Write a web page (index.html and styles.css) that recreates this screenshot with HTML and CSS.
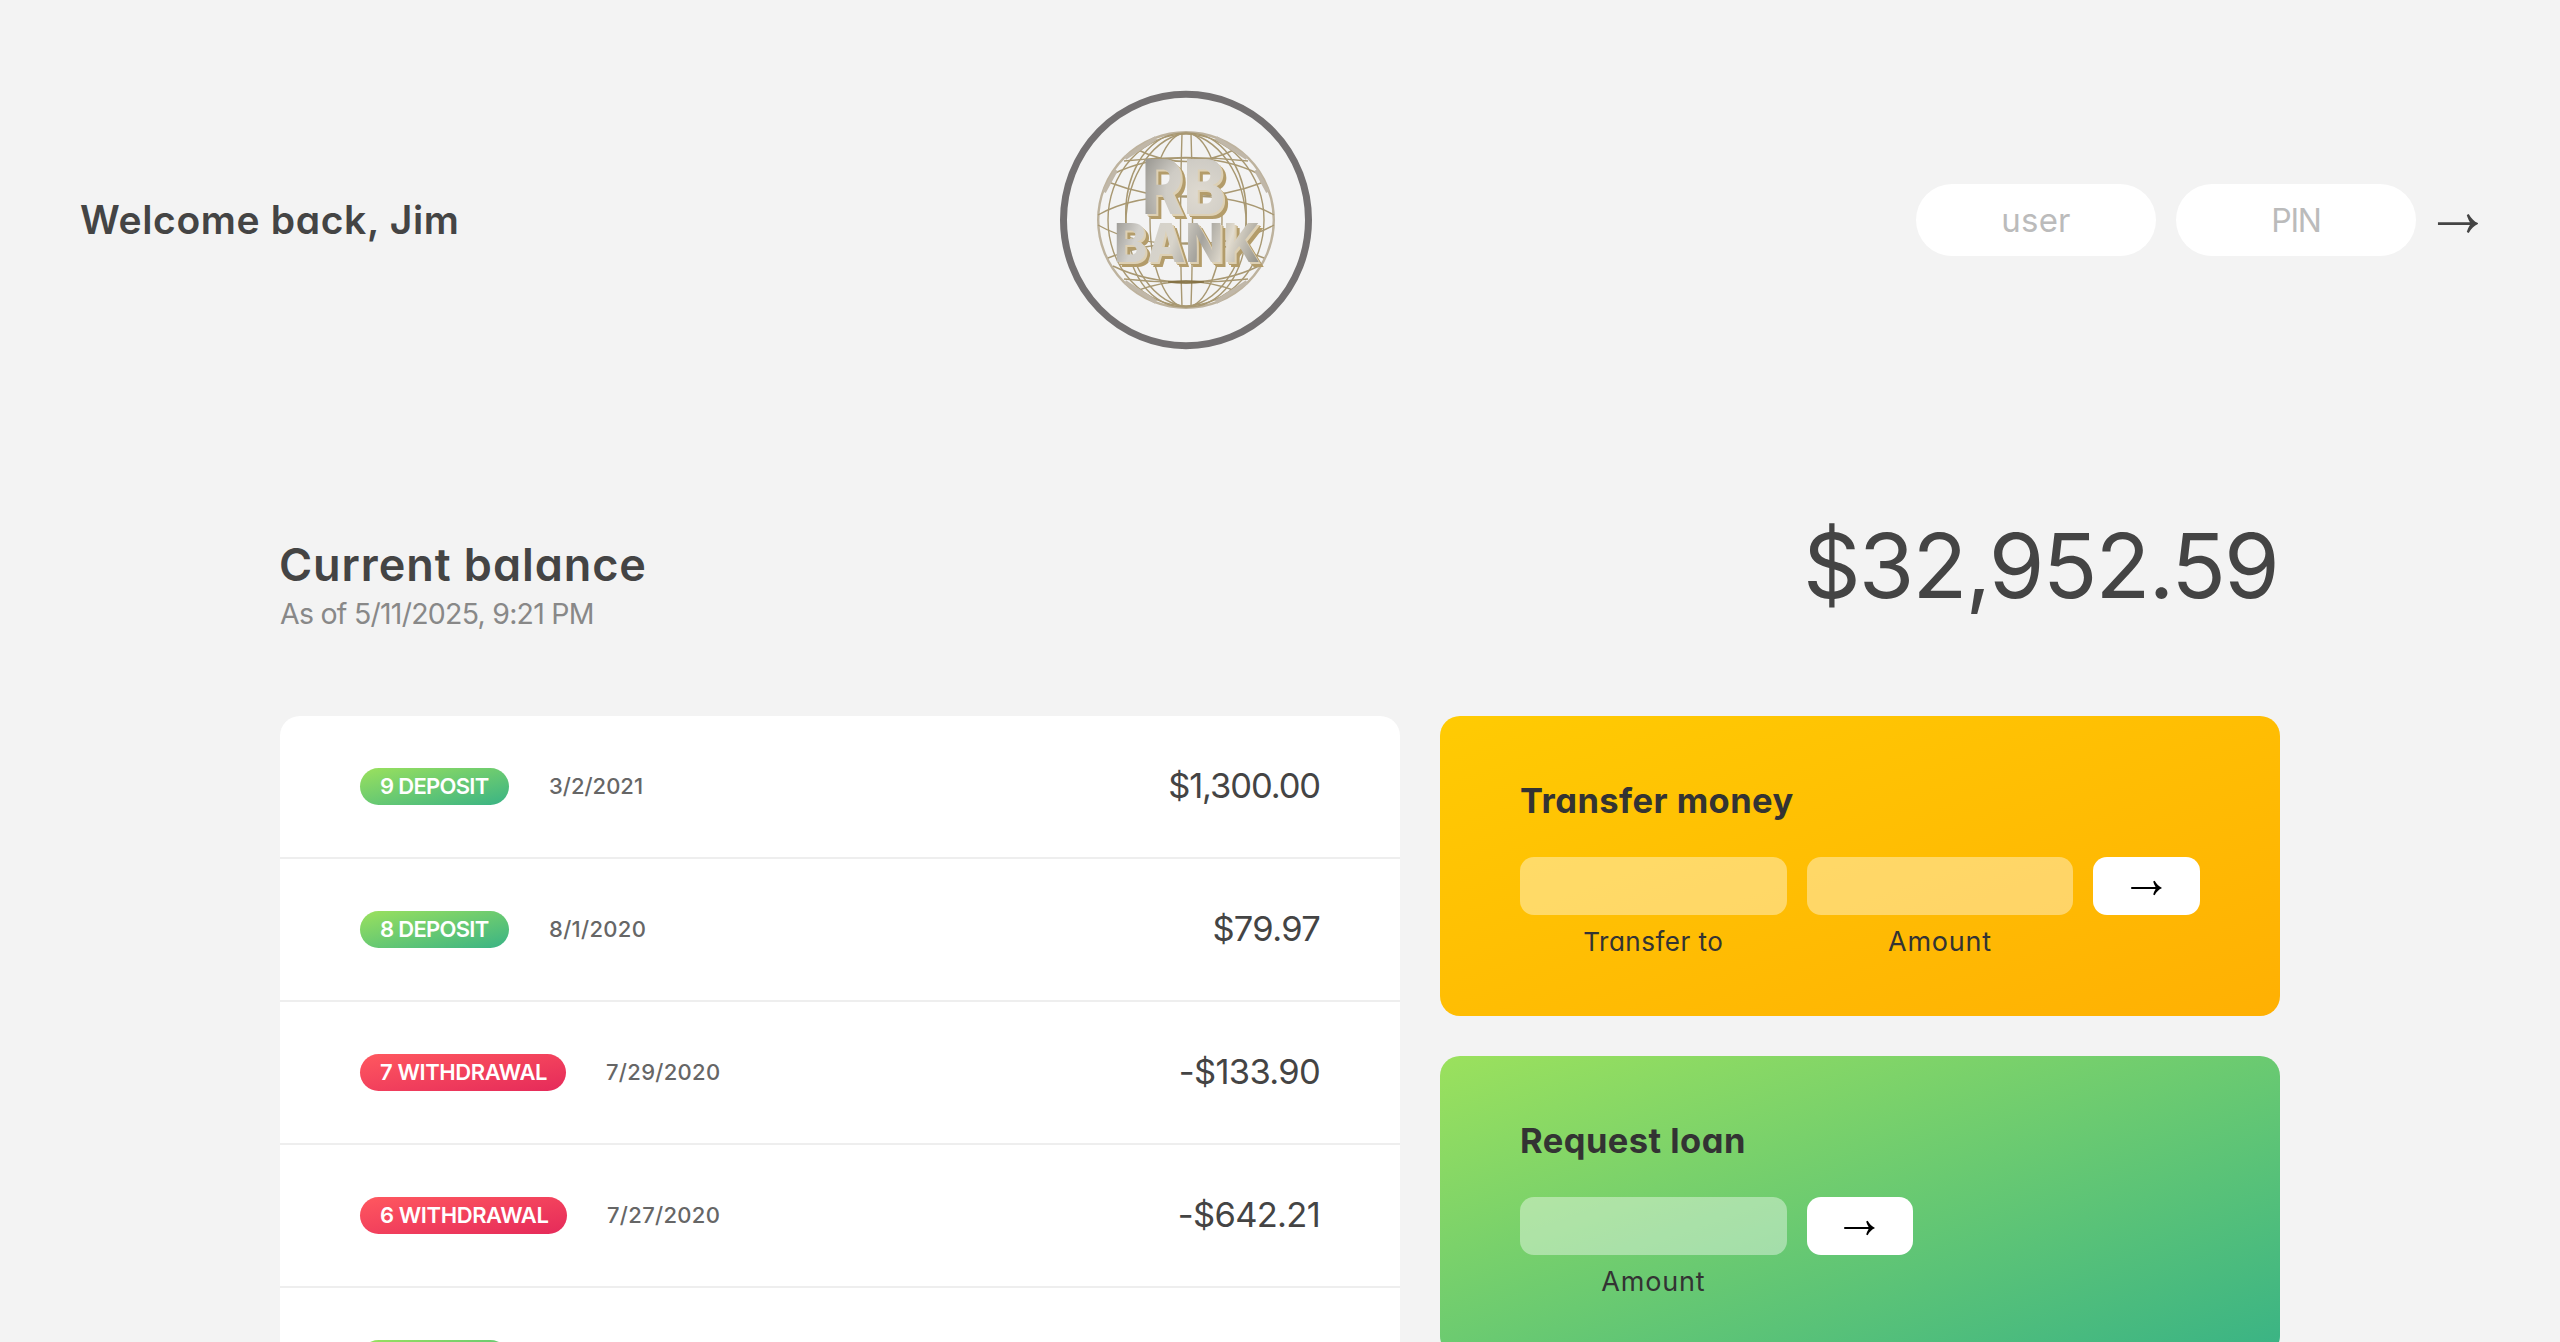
FILE: index.html
```
<!DOCTYPE html>
<html lang="en">
<head>
<meta charset="utf-8">
<title>RB Bank</title>
<link rel="stylesheet" href="styles.css">
</head>
<body>
<svg class="defs" width="0" height="0">
  <symbol id="arrow" viewBox="0 0 44 22">
    <path d="M1 9.600h33.500c-1.500-2.500-2.700-5.200-3.300-7.600l2-1c2.500 4.500 5.800 8 9.700 9.500v1c-3.900 1.500-7.200 5-9.700 9.500l-2-1c.6-2.400 1.800-5 3.300-7.500H1z"/>
  </symbol>
</svg>

<nav class="nav">
  <p class="welcome">Welcome back, Jim</p>
  <svg class="logo" viewBox="0 0 252 260">
    <defs>
      <radialGradient id="metal" gradientUnits="userSpaceOnUse" cx="140" cy="104" r="62">
        <stop offset="0" stop-color="#dfdad0"/><stop offset=".55" stop-color="#cfccc5"/><stop offset="1" stop-color="#9d9b95"/>
      </radialGradient>
      <linearGradient id="metal-wide" gradientUnits="userSpaceOnUse" x1="57" y1="120" x2="198" y2="170">
        <stop offset="0" stop-color="#96948f"/><stop offset=".18" stop-color="#d2d0cb"/><stop offset=".42" stop-color="#d8d4ca"/>
        <stop offset=".6" stop-color="#a5a39d"/><stop offset=".78" stop-color="#e2dccf"/><stop offset="1" stop-color="#96948c"/>
      </linearGradient>
    </defs>
    <ellipse class="ring" cx="126" cy="130" rx="122.500" ry="125.700"/>
    <g class="wire" transform="translate(126 130)">
      <circle r="87.800" class="rim"/>
      <path d="M-4-87Q-7 0-4 87M5-87Q8 0 5 87"/>
      <ellipse rx="36" ry="87"/>
      <ellipse rx="60" ry="87" transform="rotate(5)"/>
      <ellipse rx="60" ry="87" transform="rotate(-5)"/>
      <ellipse rx="78" ry="86"/>
      <path d="M-62-59Q0-66 62-59M-50-71Q0-46 50-71M-73-46Q-40-62 0-62T73-46"/>
      <path d="M-78-38Q0-8 78-38M-88-5Q-55-24 0-24T88-5"/>
      <path d="M-88 5Q-55 24 0 24T88 5M-78 38Q0 8 78 38"/>
      <path d="M-62 59Q0 66 62 59M-50 71Q0 52 50 71M-73 46Q-40 62 0 62T73 46"/>
      <path class="heavy" d="M-18 62Q0 60 18 62Q0 64-18 62"/>
      <path class="joint" d="M-61-62L-30-82M30-82L61-62M70-50L82-28M-82-28L-70-50M-61 62L-30 82M30 82L61 62"/>
    </g>
    <g class="wordmark">
      <text class="rb" x="82" y="124" textLength="83" lengthAdjust="spacingAndGlyphs">RB</text>
      <text class="bank" x="54" y="172" textLength="146" lengthAdjust="spacingAndGlyphs">BANK</text>
    </g>
  </svg>
  <form class="login">
    <input class="login-input user" type="text" placeholder="user">
    <input class="login-input pin" type="text" placeholder="PIN">
    <button class="login-btn" type="button" aria-label="Log in"><svg><use href="#arrow"/></svg></button>
  </form>
</nav>

<main class="app">
  <section class="balance">
    <div>
      <h1 class="balance-label">Current balance</h1>
      <p class="balance-date">As of 5/11/2025, 9:21 PM</p>
    </div>
    <p class="balance-value">$32,952.59</p>
  </section>

  <div class="board">
    <section class="movements">
      <div class="row"><span class="badge deposit">9 DEPOSIT</span><span class="date short">3/2/2021</span><span class="amount thousands">$1,300.00</span></div>
      <div class="row"><span class="badge deposit">8 DEPOSIT</span><span class="date">8/1/2020</span><span class="amount">$79.97</span></div>
      <div class="row"><span class="badge withdrawal">7 WITHDRAWAL</span><span class="date">7/29/2020</span><span class="amount">-$133.90</span></div>
      <div class="row"><span class="badge withdrawal wide">6 WITHDRAWAL</span><span class="date">7/27/2020</span><span class="amount">-$642.21</span></div>
      <div class="row"><span class="badge deposit"></span></div>
    </section>

    <div class="operations">
      <section class="card transfer">
        <h2 class="card-title">Transfer money</h2>
        <form class="fields">
          <input class="field" type="text" aria-label="Transfer to">
          <input class="field" type="text" aria-label="Amount">
          <button class="go" type="button" aria-label="Transfer"><svg><use href="#arrow"/></svg></button>
          <span class="label transfer-to">Transfer to</span>
          <span class="label">Amount</span>
        </form>
      </section>
      <section class="card loan">
        <h2 class="card-title">Request loan</h2>
        <form class="fields loan-fields">
          <input class="field" type="text" aria-label="Loan amount">
          <button class="go" type="button" aria-label="Request"><svg><use href="#arrow"/></svg></button>
          <span class="label first">Amount</span>
        </form>
      </section>
    </div>
  </div>
</main>
</body>
</html>
```
FILE: styles.css
```
* { box-sizing: border-box; margin: 0; padding: 0; }

body {
  height: 100vh;
  overflow: hidden;
  background: #f3f3f3;
  color: #444;
  font-family: Inter, "Open Sans", sans-serif;
  font-feature-settings: "cv11";
}

.defs { display: block; height: 0; }

input, button { border: none; outline: none; font-family: inherit; font-feature-settings: inherit; }

/* Top bar */
.nav {
  height: 440px;
  padding: 0 80px;
  display: flex;
  align-items: center;
  justify-content: space-between;
}
.welcome { width: 375px; white-space: nowrap; font-size: 39px; font-weight: 570; letter-spacing: .65px; line-height: 60px; }
.logo { width: 252px; height: 260px; }
.ring { fill: none; stroke: #737071; stroke-width: 7; }
.wire { fill: none; stroke: #a89872; stroke-width: 1.400; }
.rim { stroke: #bdb29d; stroke-width: 2.400; }
.heavy { stroke: #857346; stroke-width: 1.500; }
.joint { stroke: #c0b7a8; stroke-width: 4; }
.wordmark { filter: drop-shadow(2px 2px 0 #ddd0b4) drop-shadow(3px 3px 0 #b39c6a); font-weight: 800; }
.rb { font-size: 75.500px; fill: url(#metal); }
.bank { font-size: 53.500px; fill: url(#metal-wide); }

.login { display: flex; align-items: center; gap: 20px; }
.login-input {
  width: 240px;
  height: 72px;
  border-radius: 36px;
  background: #fff;
  text-align: center;
  font-size: 32px;
}
.login-input::placeholder { color: #bbb; opacity: 1; }
.user { font-size: 33px; letter-spacing: .2px; }
.pin { letter-spacing: -1.200px; }
.login-btn { width: 44px; height: 72px; background: none; display: grid; place-items: center; padding-top: 6px; }
.login-btn svg { width: 44px; height: 21px; fill: #444; }

/* Balance */
.app { width: 2000px; margin: 0 auto; padding-top: 56px; }
.balance { height: 139px; display: flex; align-items: flex-end; justify-content: space-between; }
.balance-label { margin-left: -1px; font-size: 45px; font-weight: 570; line-height: 50px; padding-bottom: 1px; letter-spacing: .95px; }
.balance-date { margin-top: 2px; font-size: 28.500px; line-height: 42px; letter-spacing: -.75px; color: #888; }
.balance-value { margin-right: 2px; font-size: 90px; line-height: 139px; letter-spacing: -1.900px; }

.board { margin-top: 81px; display: grid; grid-template-columns: 1120px 840px; gap: 40px; }

/* Movements */
.movements { height: 626px; border-radius: 20px 20px 0 0; background: #fff; overflow: hidden; }
.row { height: 143px; padding: 0 80px; display: flex; align-items: center; border-bottom: 2px solid #eee; }
.badge {
  height: 37px;
  padding: 0 20px;
  border-radius: 19px;
  color: #fff;
  font-size: 22px;
  font-weight: 570;
  line-height: 36px;
  white-space: nowrap;
}
.deposit { width: 149px; letter-spacing: -.7px; background: linear-gradient(to top left, #39b385, #9be15d); }
.withdrawal { width: 206px; letter-spacing: -.4px; background: linear-gradient(to top left, #e52a5a, #ff585f); }
.wide { width: 207px; }
.date { margin-left: 40px; padding-bottom: 2px; font-size: 22px; font-weight: 550; line-height: 36px; letter-spacing: .3px; color: #666; }
.short { letter-spacing: 0; }
.amount { margin-left: auto; padding-bottom: 1px; font-size: 34.500px; line-height: 50px; letter-spacing: -.7px; }
.thousands { letter-spacing: -1.100px; }

/* Operations */
.operations { height: 626px; overflow: hidden; display: flex; flex-direction: column; gap: 40px; }
.card { flex: none; height: 300px; padding: 60px 80px 0; border-radius: 20px; color: #333; }
.transfer { background: linear-gradient(to top left, #ffb003, #ffcb03); }
.loan { background: linear-gradient(to top left, #39b385, #9be15d); }
.card-title { margin-bottom: 31px; font-size: 34.500px; font-weight: 650; line-height: 50px; letter-spacing: .45px; }
.fields { display: grid; grid-template-columns: 2.5fr 2.5fr 1fr; column-gap: 20px; row-gap: 12px; }
.loan-fields { grid-template-columns: 2.5fr 1fr 2.5fr; }
.field { width: 100%; height: 58px; border-radius: 14px; background: rgba(255, 255, 255, .4); }
.go { height: 58px; border-radius: 14px; background: #fff; display: grid; place-items: center; padding-top: 4px; }
.go svg { width: 35px; height: 16px; fill: #000; }
.label { text-align: center; font-size: 27px; line-height: 30px; letter-spacing: .8px; }
.transfer-to { font-size: 26px; letter-spacing: .5px; }
.first { grid-column: 1; }
```
